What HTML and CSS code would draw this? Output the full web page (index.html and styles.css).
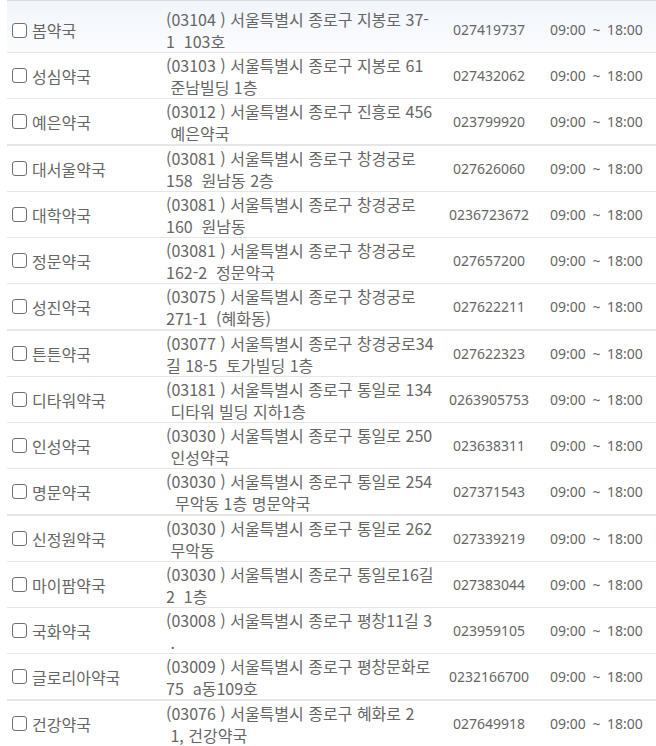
FILE: index.html
```html
<!DOCTYPE html>
<html lang="ko">
<head>
  <meta charset="UTF-8" />
  <meta name="viewport" content="width=device-width, initial-scale=1.0"/>
  <title>약국 목록</title>
  <link rel="stylesheet" href="styles.css">
</head>
<body onload="renderList()">

<div class="list" id="pharmacyList"></div>

<script>
const NB = "\u00a0";

const pharmacies = [
  ["봄약국", "(03104 ) 서울특별시 종로구 지봉로 37-", "1 " + NB + "103호", "027419737"],
  ["성심약국", "(03103 ) 서울특별시 종로구 지봉로 61", NB + "준남빌딩 1층", "027432062"],
  ["예은약국", "(03012 ) 서울특별시 종로구 진흥로 456", NB + "예은약국", "023799920"],
  ["대서울약국", "(03081 ) 서울특별시 종로구 창경궁로", "158 " + NB + "원남동 2층", "027626060"],
  ["대학약국", "(03081 ) 서울특별시 종로구 창경궁로", "160 " + NB + "원남동", "0236723672"],
  ["정문약국", "(03081 ) 서울특별시 종로구 창경궁로", "162-2 " + NB + "정문약국", "027657200"],
  ["성진약국", "(03075 ) 서울특별시 종로구 창경궁로", "271-1 " + NB + "(혜화동)", "027622211"],
  ["튼튼약국", "(03077 ) 서울특별시 종로구 창경궁로34", "길 18-5 " + NB + "토가빌딩 1층", "027622323"],
  ["디타워약국", "(03181 ) 서울특별시 종로구 통일로 134", NB + "디타워 빌딩 지하1층", "0263905753"],
  ["인성약국", "(03030 ) 서울특별시 종로구 통일로 250", NB + "인성약국", "023638311"],
  ["명문약국", "(03030 ) 서울특별시 종로구 통일로 254", NB + NB + "무악동 1층 명문약국", "027371543"],
  ["신정원약국", "(03030 ) 서울특별시 종로구 통일로 262", NB + "무악동", "027339219"],
  ["마이팜약국", "(03030 ) 서울특별시 종로구 통일로16길", "2 " + NB + "1층", "027383044"],
  ["국화약국", "(03008 ) 서울특별시 종로구 평창11길 3", NB + ".", "023959105"],
  ["글로리아약국", "(03009 ) 서울특별시 종로구 평창문화로", "75 " + NB + "a동109호", "0232166700"],
  ["건강약국", "(03076 ) 서울특별시 종로구 혜화로 2", NB + "1, 건강약국", "027649918"]
];

function renderList() {
  const list = document.getElementById("pharmacyList");
  list.innerHTML = pharmacies.map(([name, addr1, addr2, tel], i) => `
    <div class="row">
      <label class="name"><input type="checkbox" id="ph${i}"> ${name}</label>
      <div class="addr">${addr1}<br>${addr2}</div>
      <div class="tel">${tel}</div>
      <div class="hours">09:00 ~ 18:00</div>
    </div>
  `).join("");
}
</script>

</body>
</html>
```

FILE: styles.css
```css
body {
  margin: 0;
  font-family: "Noto Sans CJK KR", "Noto Sans", sans-serif;
  font-size: 16px;
  color: #666;
  background: #fff;
  overflow: hidden;
}

.list {
  margin-left: 7px;
  border-top: 1px solid #dcdcdc;
}

.row {
  display: grid;
  grid-template-columns: 154px 284px 88px 1fr;
  align-items: center;
  height: 45px;
  line-height: 22px;
  border-bottom: 1px solid #e6e6e6;
}

.row:nth-child(4n+3) {
  border-bottom-width: 2px;
}

.row:first-child {
  height: 44px;
  padding-top: 7px;
  background: linear-gradient(#f1f5fb, #fbfcfe);
}

.name {
  display: flex;
  align-items: center;
  gap: 5px;
  padding-left: 5px;
  white-space: nowrap;
}

.name input {
  appearance: none;
  width: 15px;
  height: 15px;
  margin: 0;
  border: 1px solid #707070;
  border-radius: 3px;
  background: #fff;
}

.addr {
  padding-left: 5px;
  white-space: nowrap;
}

.tel,
.hours {
  font-family: "Noto Sans", sans-serif;
  font-size: 14px;
}

.tel {
  text-align: center;
}

.hours {
  padding-left: 17px;
  white-space: nowrap;
  word-spacing: 3px;
}
```
